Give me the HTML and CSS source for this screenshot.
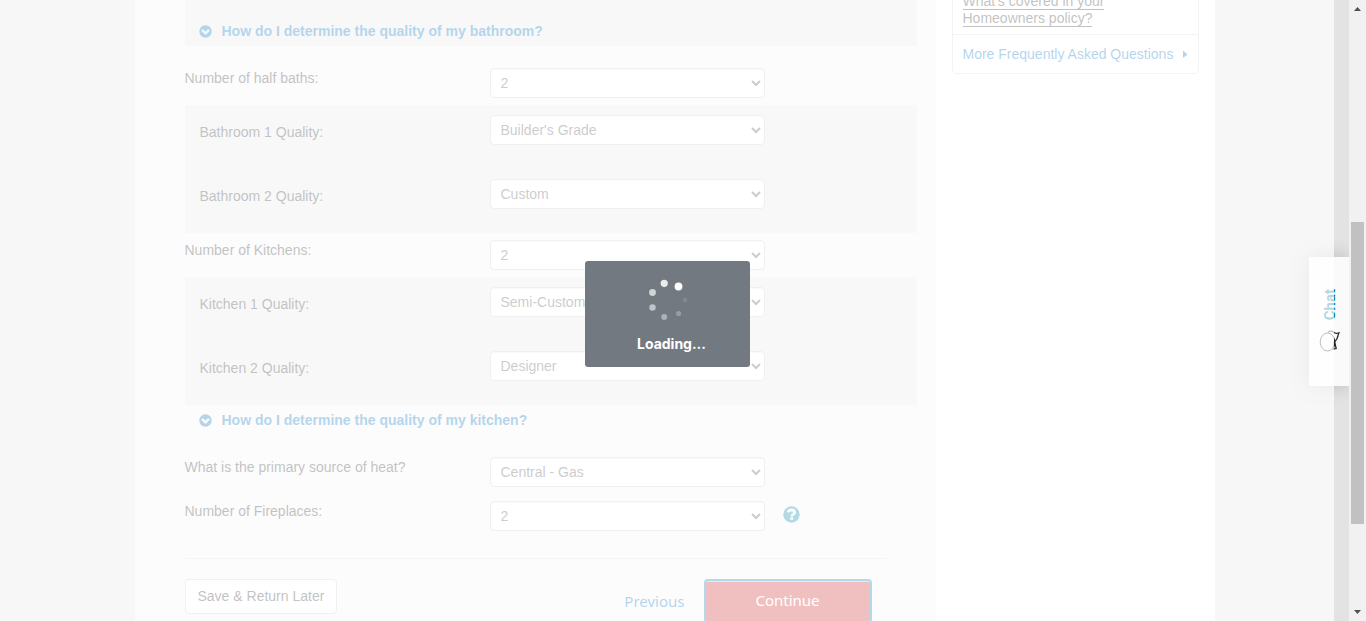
FILE: index.html
```html
<!DOCTYPE html>
<html lang="en">
<head>
<meta charset="utf-8">
<title>Homeowners Quote</title>
<link rel="stylesheet" href="styles.css">
</head>
<body>
<div class="viewport">
  <div class="page">
    <main class="form-column">
      <form class="quote-form">
        <div class="panel panel-link">
          <a class="toggle" href="#bath-help">
            <svg width="13" height="13" viewBox="0 0 13 13" aria-hidden="true"><circle cx="6.5" cy="6.5" r="6.2" fill="currentColor"/><path d="M3 4.900l3.500 3.500L10 4.900" fill="none" stroke="#e7e7e7" stroke-width="2.300"/></svg>
            How do I determine the quality of my bathroom?</a>
        </div>
        <div class="row row-first">
          <label for="half-baths">Number of half baths:</label>
          <select id="half-baths"><option>2</option></select>
        </div>
        <div class="panel">
          <div class="sub-row">
            <label for="bath1">Bathroom 1 Quality:</label>
            <select id="bath1"><option>Builder's Grade</option></select>
          </div>
          <div class="sub-row">
            <label for="bath2">Bathroom 2 Quality:</label>
            <select id="bath2"><option>Custom</option></select>
          </div>
        </div>
        <div class="row">
          <label for="kitchens">Number of Kitchens:</label>
          <select id="kitchens"><option>2</option></select>
        </div>
        <div class="panel">
          <div class="sub-row">
            <label for="kitchen1">Kitchen 1 Quality:</label>
            <select id="kitchen1"><option>Semi-Custom</option></select>
          </div>
          <div class="sub-row">
            <label for="kitchen2">Kitchen 2 Quality:</label>
            <select id="kitchen2"><option>Designer</option></select>
          </div>
        </div>
        <div class="kitchen-link">
          <a class="toggle" href="#kitchen-help">
            <svg width="13" height="13" viewBox="0 0 13 13" aria-hidden="true"><circle cx="6.5" cy="6.5" r="6.2" fill="currentColor"/><path d="M3 4.900l3.500 3.500L10 4.900" fill="none" stroke="#f5f5f5" stroke-width="2.300"/></svg>
            How do I determine the quality of my kitchen?</a>
        </div>
        <div class="row">
          <label for="heat">What is the primary source of heat?</label>
          <select id="heat"><option>Central - Gas</option></select>
        </div>
        <div class="row">
          <label for="fireplaces">Number of Fireplaces:</label>
          <select id="fireplaces"><option>2</option></select>
          <button class="help" type="button" aria-label="Help with fireplaces">
            <svg width="17" height="17" viewBox="0 0 17 17" aria-hidden="true"><circle cx="8.5" cy="8.5" r="8.200" fill="currentColor"/><path d="M5.200 6.400C5.400 4.700 6.700 4 8.500 4c1.900 0 3.100.9 3.100 2.400 0 2-2.900 1.900-2.900 3.900" fill="none" stroke="#f5f5f5" stroke-width="2.800"/><rect x="7.200" y="11.200" width="3" height="2.600" fill="#f5f5f5"/></svg>
          </button>
        </div>
        <div class="actions">
          <button class="save" type="button">Save &amp; Return Later</button>
          <a class="previous" href="#previous">Previous</a>
          <button class="continue" type="submit">Continue</button>
        </div>
      </form>
    </main>
    <aside class="sidebar">
      <div class="faq">
        <div class="faq-item"><a href="#covered">What's covered in your Homeowners policy?</a></div>
        <a class="faq-more" href="#faq">More Frequently Asked Questions
          <svg width="5" height="8" viewBox="0 0 5 8" aria-hidden="true"><path d="M0 .5l4.500 4L0 8z" fill="currentColor"/></svg></a>
      </div>
    </aside>
  </div>
  <button class="chat" type="button">
    <span class="chat-label">Chat</span>
    <svg width="22" height="22" viewBox="0 0 22 22" aria-hidden="true" fill="none" stroke="#222"><ellipse cx="8.5" cy="12" rx="7.300" ry="9" stroke-width="1"/><path d="M9 2.300c2-1.500 4-1.200 5.500 0 1.500 1.200 3.500 1.200 5.500.4l-.8 2.200c-.5 3-2 5.500-3.600 6.600l1.600 7-3 .6 1.200-3.500c-.5-1.500-.5-2.600 0-4.100" stroke-width="1.200"/></svg>
  </button>
  <div class="overlay">
    <div class="loading" role="status">
      <svg width="40" height="42" viewBox="647 279 40 42" fill="#fff" aria-hidden="true"><circle cx="678.500" cy="286.500" r="3.900"/><circle cx="664.200" cy="283.300" r="3.600" opacity=".85"/><circle cx="652.500" cy="292.500" r="3.400" opacity=".68"/><circle cx="652.500" cy="307.500" r="3.200" opacity=".56"/><circle cx="664.200" cy="316.900" r="3" opacity=".42"/><circle cx="678.600" cy="313.500" r="2.600" opacity=".27"/><circle cx="685" cy="300" r="2.200" opacity=".13"/></svg>
      <span>Loading...</span>
    </div>
  </div>
</div>
<div class="scrollbar" aria-hidden="true">
  <svg width="17" height="17" viewBox="0 0 17 17"><path d="M5 11l3.500-4 3.500 4z" fill="#505050"/></svg>
  <div class="track"><div class="thumb"></div></div>
  <svg width="17" height="17" viewBox="0 0 17 17"><path d="M5 6l3.500 4L12 6z" fill="#505050"/></svg>
</div>
</body>
</html>
```
FILE: styles.css
```css
* {
  box-sizing: border-box;
}

body {
  display: flex;
  height: 100vh;
  margin: 0;
  overflow: hidden;
  background: #e3e3e3;
  color: #333;
  font: 14px/20px "Liberation Sans", Arial, sans-serif;
}

a {
  color: #0073c0;
  text-decoration: none;
}

button,
select {
  font: inherit;
}

.viewport {
  position: relative;
  flex: 1;
  overflow: hidden;
}

.page {
  display: flex;
  max-width: 1080px;
  min-height: 100%;
  margin: 0 auto;
  background: #fff;
}

.form-column {
  flex: 1;
  padding: 0 19px 0 50px;
  background: #f5f5f5;
}

.panel {
  padding-left: 15px;
  background: #e7e7e7;
}

.panel-link {
  padding: 21px 14px 5px;
}

.kitchen-link {
  padding: 5px 14px 20px;
}

.toggle {
  display: flex;
  align-items: center;
  gap: 10px;
  font-weight: bold;
}

.row {
  display: grid;
  grid-template-columns: 305px 275px auto;
  justify-content: start;
  padding: 7px 0;
}

.row-first {
  margin-top: 15px;
}

.sub-row {
  display: grid;
  grid-template-columns: 290px 275px;
  padding: 10px 0 24px;
}

.sub-row label {
  padding-top: 7px;
}

select {
  height: 30px;
  padding: 0 1px 0 6px;
  border: 1px solid #ccc;
  border-radius: 4px;
  background-color: #fff;
  box-shadow: inset 0 1px 1px #eee;
  color: #555;
}

.help {
  align-self: start;
  display: flex;
  margin: 5px 0 0 18px;
  padding: 0;
  border: 0;
  background: none;
  color: #0082a3;
}

.actions {
  display: flex;
  align-items: flex-start;
  margin: 20px 30px 0 0;
  padding: 20px 15px 20px 0;
  border-top: 1px solid #ddd;
}

.save {
  height: 35px;
  padding: 0 12px 2px;
  border: 1px solid #ccc;
  border-radius: 4px;
  background: #fff;
  color: #333;
}

.previous {
  margin: 12px 19px 0 auto;
  font: 15px/20px "Noto Sans", sans-serif;
}

.continue {
  width: 168px;
  height: 44px;
  padding: 0 0 2px;
  border: 2px solid #007dc0;
  border-radius: 4px;
  background: #cc2c2e;
  box-shadow: inset 0 1px 0 #e9a0a0;
  color: #fff;
  font: 15px/20px "Noto Sans", sans-serif;
}

.sidebar {
  width: 279px;
  padding: 0 16px;
}

.faq {
  margin-top: -18px;
  border: 1px solid #d5d5d5;
  border-radius: 5px;
}

.faq-item {
  padding: 10px 60px 7px 10px;
  line-height: 17px;
}

.faq-item a {
  border-bottom: 1px solid #333;
  color: #333;
}

.faq-more {
  display: flex;
  align-items: center;
  justify-content: space-between;
  padding: 9px 10px;
  border-top: 1px solid #d5d5d5;
}

.chat {
  position: absolute;
  right: 0;
  top: 257px;
  display: flex;
  flex-direction: column;
  align-items: center;
  gap: 10px;
  width: 40px;
  height: 129px;
  padding: 32px 0 0 2px;
  border: 0;
  background: #fafafa;
  box-shadow: 0 0 20px rgba(0, 0, 0, 0.2);
}

.chat-label {
  color: #00789e;
  font: bold 15px/16px Roboto, sans-serif;
  writing-mode: vertical-rl;
  transform: rotate(180deg);
}

.overlay {
  position: absolute;
  inset: 0 15px 0 0;
  display: flex;
  align-items: center;
  justify-content: center;
  padding-top: 7px;
  background: rgba(255, 255, 255, 0.7);
}

.loading {
  display: flex;
  flex-direction: column;
  align-items: center;
  gap: 13px;
  width: 165px;
  padding: 18px 0 13px;
  border-radius: 3px;
  background: #737981;
  color: #fff;
  font: bold 14px/20px Inter, sans-serif;
}

.loading span {
  padding-left: 9px;
}

.scrollbar {
  display: flex;
  flex-direction: column;
  width: 17px;
  background: #f1f1f1;
}

.track {
  display: flex;
  flex: 1;
  flex-direction: column;
  padding: 205px 2px 0;
}

.thumb {
  height: 302px;
  background: #c1c1c1;
}
```
